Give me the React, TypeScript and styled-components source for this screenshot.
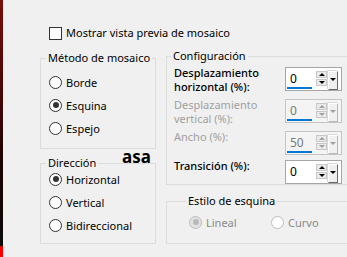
import styled, { createGlobalStyle, css } from "styled-components";

const GlobalStyle = createGlobalStyle`
  html, body {
    margin: 0;
    padding: 0;
    background: #f0f0f0;
    overflow: hidden;
  }
  body {
    font-family: "Noto Sans", "Segoe UI", sans-serif;
    font-size: 11px;
    color: #000;
  }
`;

const Window = styled.div`
  display: flex;
  width: 347px;
  height: 257px;
  overflow: hidden;
`;

const RedEdge = styled.div`
  width: 3px;
  flex-shrink: 0;
  background: linear-gradient(
    #7c0c0c 0%,
    #4a0707 35%,
    #1a0303 65%,
    #0b0b0b 95.5%,
    #ff0000 96%,
    #ff0000 100%
  );
`;

const Content = styled.div`
  padding: 26px 0 0 37px;
  display: flex;
  flex-direction: column;
`;

const CheckRow = styled.label`
  display: flex;
  align-items: center;
  gap: 4px;
  margin-left: 9px;
  height: 14px;
  line-height: 14px;
`;

const CheckBox = styled.span`
  width: 11px;
  height: 11px;
  border: 1px solid #333;
  background: #fff;
  flex-shrink: 0;
`;

const Columns = styled.div`
  display: flex;
  gap: 10px;
  margin-top: 10px;
`;

const Column = styled.div<{ $width: number; $gap: number }>`
  display: flex;
  flex-direction: column;
  width: ${(p) => p.$width}px;
  flex-shrink: 0;
  gap: ${(p) => p.$gap}px;
`;

const Group = styled.fieldset<{ $pad: number; $height: number }>`
  position: relative;
  margin: 0;
  padding: 0 0 0 ${(p) => p.$pad}px;
  border: 1px solid #dcdcdc;
  height: ${(p) => p.$height}px;
  box-sizing: border-box;
  min-width: 0;
`;

const Legend = styled.legend<{ $lh?: number }>`
  margin-left: -3px;
  padding: 0 2px;
  line-height: ${(p) => p.$lh ?? 16}px;
  white-space: nowrap;
`;

const RadioList = styled.div<{ $top: number }>`
  display: flex;
  flex-direction: column;
  gap: 7px;
  margin-top: ${(p) => p.$top}px;
`;

const RadioRow = styled.label<{ $disabled?: boolean }>`
  display: flex;
  align-items: center;
  gap: 4px;
  height: 16px;
  color: ${(p) => (p.$disabled ? "#8a8a8a" : "#000")};
`;

const Circle = styled.span<{ $checked?: boolean; $disabled?: boolean }>`
  width: 11px;
  height: 11px;
  border-radius: 50%;
  border: 1px solid ${(p) => (p.$disabled ? "#bcbcbc" : "#333")};
  background: ${(p) => (p.$disabled && p.$checked ? "#e2e2e2" : "#fff")};
  display: flex;
  align-items: center;
  justify-content: center;
  flex-shrink: 0;
  &::after {
    content: "";
    width: 6px;
    height: 6px;
    border-radius: 50%;
    background: ${(p) => (p.$disabled ? "#b8b8b8" : "#333")};
    display: ${(p) => (p.$checked ? "block" : "none")};
  }
`;

const Stamp = styled.span`
  position: absolute;
  left: 81px;
  top: -22px;
  font-size: 17px;
  font-weight: 700;
  line-height: 16px;
`;

const SettingRows = styled.div`
  display: flex;
  flex-direction: column;
  gap: 5px;
  margin-top: 5px;
`;

const SettingRow = styled.div`
  display: flex;
  align-items: flex-start;
`;

const SettingLabel = styled.div<{ $disabled?: boolean }>`
  width: 111px;
  line-height: 14px;
  margin-top: -1px;
  font-weight: ${(p) => (p.$disabled ? 400 : 500)};
  color: ${(p) => (p.$disabled ? "#a0a0a0" : "#000")};
`;

const SpinBox = styled.div<{ $disabled?: boolean }>`
  width: 57px;
  height: 24px;
  box-sizing: border-box;
  border: 1px solid ${(p) => (p.$disabled ? "#c4c4c4" : "#a6a6a6")};
  background: ${(p) => (p.$disabled ? "#f4f4f4" : "#fff")};
  display: flex;
  padding: 2px 3px 1px 1px;
`;

const EditArea = styled.div<{ $disabled?: boolean }>`
  width: 27px;
  display: flex;
  flex-direction: column;
  justify-content: space-between;
  color: ${(p) => (p.$disabled ? "#7a7a7a" : "#000")};
`;

const Value = styled.span`
  padding-left: 3px;
  line-height: 17px;
  font-size: 12px;
`;

const Bar = styled.span<{ $show: boolean }>`
  height: 3px;
  background: ${(p) => (p.$show ? "#0078d7" : "transparent")};
`;

const Spinner = styled.div`
  display: flex;
  flex-direction: column;
  gap: 1px;
  margin: 1px 0 0 4px;
`;

const arrow = (dir: "up" | "down", color: string) => css`
  &::after {
    content: "";
    border-left: 3px solid transparent;
    border-right: 3px solid transparent;
    ${dir === "up"
      ? `border-bottom: 3px solid ${color};`
      : `border-top: 3px solid ${color};`}
  }
`;

const SpinButton = styled.span<{ $dir: "up" | "down"; $disabled?: boolean }>`
  width: 9px;
  height: 5px;
  border: 1px solid #c8c8c8;
  background: #eaeaea;
  display: flex;
  align-items: center;
  justify-content: center;
  ${(p) => arrow(p.$dir, p.$disabled ? "#a0a0a0" : "#000")}
`;

const DropButton = styled.span<{ $disabled?: boolean }>`
  width: 8px;
  height: 15px;
  margin: 1px 0 0 1px;
  background: #f0f0f0;
  border-top: 1px solid #fff;
  border-left: 1px solid #fff;
  border-right: 1px solid ${(p) => (p.$disabled ? "#b8b8b8" : "#696969")};
  border-bottom: 1px solid ${(p) => (p.$disabled ? "#b8b8b8" : "#696969")};
  box-shadow: -1px -1px 0 #d8d8d8;
  display: flex;
  align-items: center;
  justify-content: center;
  padding-bottom: 2px;
  box-sizing: content-box;
  ${(p) => arrow("down", p.$disabled ? "#a0a0a0" : "#000")}
`;

const CornerRow = styled.div`
  display: flex;
  margin-top: 5px;
`;

const CornerItem = styled.div`
  width: 82px;
`;

type SpinProps = { value: string; disabled?: boolean; bar?: boolean };

const Spin = ({ value, disabled, bar = true }: SpinProps) => (
  <SpinBox $disabled={disabled}>
    <EditArea $disabled={disabled}>
      <Value>{value}</Value>
      <Bar $show={bar} />
    </EditArea>
    <Spinner>
      <SpinButton $dir="up" $disabled={disabled} />
      <SpinButton $dir="down" $disabled={disabled} />
    </Spinner>
    <DropButton $disabled={disabled} />
  </SpinBox>
);

type RadioProps = { label: string; checked?: boolean; disabled?: boolean };

const Radio = ({ label, checked, disabled }: RadioProps) => (
  <RadioRow $disabled={disabled}>
    <Circle $checked={checked} $disabled={disabled} />
    {label}
  </RadioRow>
);

export default function App() {
  return (
    <>
      <GlobalStyle />
      <Window>
        <RedEdge />
        <Content>
          <CheckRow>
            <CheckBox />
            Mostrar vista previa de mosaico
          </CheckRow>
          <Columns>
            <Column $width={116} $gap={6}>
              <Group $pad={8} $height={99}>
                <Legend>Método de mosaico</Legend>
                <RadioList $top={8}>
                  <Radio label="Borde" />
                  <Radio label="Esquina" checked />
                  <Radio label="Espejo" />
                </RadioList>
              </Group>
              <Group $pad={8} $height={89}>
                <Legend>Dirección</Legend>
                <Stamp>asa</Stamp>
                <RadioList $top={0}>
                  <Radio label="Horizontal" checked />
                  <Radio label="Vertical" />
                  <Radio label="Bidireccional" />
                </RadioList>
              </Group>
            </Column>
            <Column $width={200} $gap={8}>
              <Group $pad={7} $height={135}>
                <Legend $lh={12}>Configuración</Legend>
                <SettingRows>
                  <SettingRow>
                    <SettingLabel>
                      Desplazamiento
                      <br />
                      horizontal (%):
                    </SettingLabel>
                    <Spin value="0" />
                  </SettingRow>
                  <SettingRow>
                    <SettingLabel $disabled>
                      Desplazamiento
                      <br />
                      vertical (%):
                    </SettingLabel>
                    <Spin value="0" disabled />
                  </SettingRow>
                  <SettingRow>
                    <SettingLabel $disabled>Ancho (%):</SettingLabel>
                    <Spin value="50" disabled />
                  </SettingRow>
                  <SettingRow>
                    <SettingLabel>Transición (%):</SettingLabel>
                    <Spin value="0" bar={false} />
                  </SettingRow>
                </SettingRows>
              </Group>
              <Group $pad={22} $height={51}>
                <Legend>Estilo de esquina</Legend>
                <CornerRow>
                  <CornerItem>
                    <Radio label="Lineal" checked disabled />
                  </CornerItem>
                  <CornerItem>
                    <Radio label="Curvo" disabled />
                  </CornerItem>
                </CornerRow>
              </Group>
            </Column>
          </Columns>
        </Content>
      </Window>
    </>
  );
}
